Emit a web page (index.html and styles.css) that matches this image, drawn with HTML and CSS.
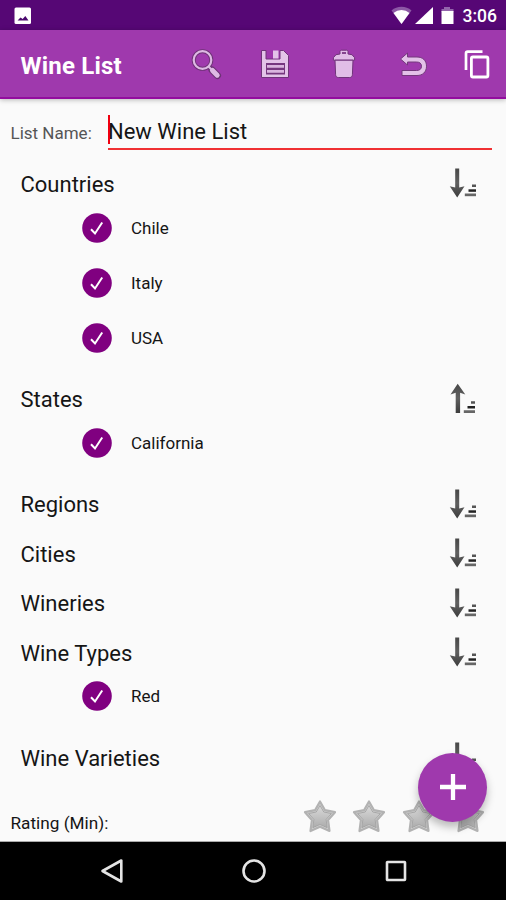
FILE: index.html
```html
<!DOCTYPE html>
<html lang="en">
<head>
<meta charset="utf-8">
<title>Wine List</title>
<link rel="stylesheet" href="styles.css">
</head>
<body>
<svg class="defs" aria-hidden="true">
  <defs>
    <linearGradient id="shaft" x1="0" x2="0" y1="0" y2="1"><stop offset="0" stop-color="#484848"/><stop offset=".5" stop-color="#606060"/><stop offset="1" stop-color="#3c3c3c"/></linearGradient>
    <linearGradient id="silver" x1="0" x2="0" y1="0" y2="1"><stop offset="0" stop-color="#dadada"/><stop offset="1" stop-color="#acacac"/></linearGradient>
    <symbol id="bars" viewBox="0 0 28 32"><path d="M23 17.500h4v2.500h-4z" fill="#555"/><path d="M19.500 22.300h7.500v2.500h-7.500z" fill="#222"/><path d="M15.800 26.500H27v2.700H15.800z" fill="#666"/></symbol>
    <symbol id="down" viewBox="0 0 28 32"><path d="M6.200 1.500h4v19l5.300-1.300L8.200 30.500.8 19.200l5.400 1.300z" fill="url(#shaft)"/><use href="#bars"/></symbol>
    <symbol id="up" viewBox="0 0 28 32"><path d="M6.700 30V9.800L1.500 11.500 8.700.7l7.600 10.800-5.200-1.700V30z" fill="url(#shaft)"/><use href="#bars" y=".8" x="-1"/></symbol>
    <symbol id="check" viewBox="0 0 30 30"><circle cx="15" cy="15" r="14.800" fill="#800080"/><path d="M9 16.200l4 4.300 7.200-11" fill="none" stroke="#fff" stroke-width="2"/></symbol>
    <symbol id="star" viewBox="0 0 34 34"><path d="M17 2.500l5 8.700 10 2-6.900 7.900 1.400 10.900L17 27.800 7.500 32l1.400-10.900L2 13.200l10-2z" fill="#d2d2d2" stroke="#b2b2b2" stroke-width="2.200" stroke-linejoin="round"/><path d="M17 6.500l3.800 6.500 7.600 1.500-5.300 6 1.100 8.200-7.200-3.200-7.200 3.200 1.100-8.200-5.300-6 7.600-1.500z" fill="url(#silver)" stroke="#a3a3a3" stroke-width=".9" stroke-linejoin="round"/></symbol>
  </defs>
</svg>
<div class="screen">
  <header class="status">
    <svg class="picture" viewBox="0 0 18 18"><rect x=".5" y=".5" width="16.500" height="16.500" rx="1.500" fill="#fff"/><path d="M3.500 13.500l3-3 2.200 1.500 2.600-3 3.200 4.500z" fill="#4a086e"/></svg>
    <div class="system">
      <svg class="signals" viewBox="0 0 66 20"><path d="M.5 4.500a15.500 15.500 0 0 1 20 0L10.500 18z" fill="#8c58a5"/><path d="M2.500 7a12.500 12.500 0 0 1 16 0L10.500 18z" fill="#fff"/><path d="M42 1v17H24z" fill="#fff"/><path d="M53 1h6v2h3.500v3h-12V3H53z" fill="#9365ab"/><path d="M50.500 5h12v13h-12z" fill="#fff"/></svg>
      <span class="time">3:06</span>
    </div>
  </header>
  <div class="toolbar">
    <h1>Wine List</h1>
    <div class="tools">
      <svg viewBox="0 0 34 34" fill="none"><circle cx="13.500" cy="13" r="8.800" stroke="#6d3275" stroke-width="4"/><path d="M19.500 19.500l4 4" stroke="#6d3275" stroke-width="4"/><path d="M23 23l5.500 5.500" stroke="#6d3275" stroke-width="7" stroke-linecap="round"/><circle cx="13.500" cy="13" r="8.800" stroke="#deb9e4" stroke-width="2.200"/><path d="M19.500 19.500l4 4" stroke="#deb9e4" stroke-width="2"/><path d="M23.500 23.500l4.700 4.700" stroke="#deb9e4" stroke-width="5" stroke-linecap="round"/></svg>
      <svg viewBox="0 0 34 34"><path d="M3.500 3.500H8V12h14V3.500h3.500l5 5v22h-27z" fill="#e3c4e8" stroke="#70347a"/><path d="M15 3.500h5.500v8H15z" fill="#e3c4e8"/><path d="M8 16h19v11.500H8z" fill="#76387f"/><path d="M9 18h17v2.800H9zm0 5h17v2.800H9z" fill="#dab5df"/></svg>
      <svg viewBox="0 0 34 34"><path d="M13 7V4.500c0-.8.600-1.300 1.400-1.300h5.200c.8 0 1.400.5 1.400 1.300V7l4 .7 2.600 3v2.500H6.400v-2.500L9 7.700z" fill="#e1bde7" stroke="#70347a"/><path d="M8 13.200h18l-.6 14.500c-.1 1.800-1 2.800-2.700 2.800H11.300c-1.700 0-2.600-1-2.700-2.800z" fill="#e1bde7" stroke="#70347a"/><path d="M15 5h4v2h-4z" fill="#85448e"/></svg>
      <svg viewBox="0 0 34 34"><path d="M4.500 12l7-6v4H21c5.500 0 9.500 3.300 9.500 9.200 0 6-4 9.300-9.500 9.300H6v-5h14.500c3.200 0 5-1.500 5-4.300 0-2.700-1.800-4.200-5-4.200h-9V18z" fill="#e3c1e8" stroke="#74387d"/></svg>
      <svg viewBox="0 0 34 34"><path d="M6 23V6.500c0-1 .7-1.800 1.700-1.800H22.500" fill="none" stroke="#fff" stroke-width="2.700"/><rect x="11.400" y="10" width="16.500" height="20" rx="1.500" fill="none" stroke="#fff" stroke-width="2.800"/></svg>
    </div>
  </div>
  <main>
    <div class="name-row">
      <label>List Name:</label>
      <div class="field">New Wine List</div>
    </div>
    <section><div class="heading"><h2>Countries</h2><svg><use href="#down"/></svg></div>
      <ul><li><svg><use href="#check"/></svg>Chile</li><li><svg><use href="#check"/></svg>Italy</li><li><svg><use href="#check"/></svg>USA</li></ul></section>
    <section><div class="heading"><h2>States</h2><svg><use href="#up"/></svg></div>
      <ul><li><svg><use href="#check"/></svg>California</li></ul></section>
    <section><div class="heading"><h2>Regions</h2><svg><use href="#down"/></svg></div></section>
    <section><div class="heading"><h2>Cities</h2><svg><use href="#down"/></svg></div></section>
    <section><div class="heading"><h2>Wineries</h2><svg><use href="#down"/></svg></div></section>
    <section><div class="heading"><h2>Wine Types</h2><svg><use href="#down"/></svg></div>
      <ul><li><svg><use href="#check"/></svg>Red</li></ul></section>
    <section><div class="heading"><h2>Wine Varieties</h2><svg><use href="#down"/></svg></div></section>
    <div class="rating"><span>Rating (Min):</span><div class="stars"><svg><use href="#star"/></svg><svg><use href="#star"/></svg><svg><use href="#star"/></svg><svg><use href="#star"/></svg></div></div>
    <button class="add" aria-label="Add"><svg viewBox="0 0 28 28"><path d="M14 1v26M1 14h26" stroke="#fff" stroke-width="4.300"/></svg></button>
  </main>
  <nav>
    <svg viewBox="0 0 28 28"><path d="M23.300 3.500v21L4.500 14z"/></svg>
    <svg viewBox="0 0 28 28"><circle cx="14" cy="14" r="10.500"/></svg>
    <svg viewBox="0 0 28 28"><rect x="5" y="5" width="18" height="18" rx=".5"/></svg>
  </nav>
</div>
</body>
</html>
```
FILE: styles.css
```css
* { box-sizing: border-box; }
body { margin: 0; font-family: Roboto, sans-serif; color: #151515; background: #fafafa; }
h1, h2, ul { margin: 0; padding: 0; }
.defs { position: absolute; width: 0; height: 0; }
.screen { width: 506px; height: 900px; display: flex; flex-direction: column; overflow: hidden; }
.status { height: 30px; flex: none; background: #560775; display: flex; align-items: center; justify-content: space-between; padding: 2px 9px 0 14px; }
.picture { width: 18px; height: 18px; }
.system { display: flex; align-items: center; gap: 6px; }
.signals { width: 66px; height: 20px; }
.time { color: #fff; font-size: 17.5px; font-weight: 500; line-height: 20px; }
.toolbar { height: 69px; flex: none; background: #9f39ad; border-bottom: 2px solid #930d9f; box-shadow: 0 1px 5px #0004; display: flex; align-items: center; justify-content: space-between; padding-left: 20.5px; z-index: 1; }
h1 { color: #fff; font-size: 24px; line-height: 30px; font-weight: 700; letter-spacing: .2px; padding-top: 4px; }
.tools { display: grid; grid-template-columns: 69px 69px 69px 69px 59px; justify-items: center; }
.tools svg { width: 34px; height: 34px; }
main { position: relative; height: 743px; flex: none; background: #fafafa; border-bottom: 1px solid #aaa; overflow: hidden; }
.name-row { display: flex; align-items: flex-start; padding: 16px 14px 0 10.5px; height: 60.5px; }
label { width: 97.5px; flex: none; color: #555; font-size: 17px; line-height: 20px; padding-top: 8px; }
.field { flex: 1; height: 35px; border-bottom: 2px solid #f03033; font-size: 22px; line-height: 34px; position: relative; }
.field::before { content: ""; position: absolute; left: 0; top: 0; width: 2px; height: 29px; background: #f00010; }
.heading { height: 49.5px; padding: 1px 29px 0 20.5px; display: flex; align-items: center; justify-content: space-between; }
h2 { font-size: 22px; line-height: 28px; font-weight: 400; }
.heading svg { width: 28px; height: 32px; margin-top: -3px; }
ul { list-style: none; margin: -9px 0 9.3px; }
li { height: 55.2px; padding-left: 81.5px; display: flex; align-items: center; gap: 19.5px; font-size: 17px; }
li svg { width: 30px; height: 30px; }
.rating { display: flex; align-items: center; justify-content: space-between; height: 70px; padding: 11px 21px 0 10.5px; font-size: 17.2px; }
.stars { display: flex; gap: 15.5px; margin-top: -15px; }
.stars svg { width: 34px; height: 34px; }
.add { position: absolute; left: 418px; top: 653.5px; width: 69px; height: 69px; padding: 0; border: 0; border-radius: 50%; background: #9f39ad; box-shadow: 0 5px 9px #0004; display: grid; place-items: center; }
.add svg { width: 28px; height: 28px; }
nav { flex: 1; background: #000; display: grid; grid-template-columns: repeat(3, 142px); justify-content: center; align-items: center; justify-items: center; padding-left: 2px; }
nav svg { width: 28px; height: 28px; fill: none; stroke: #e4e4e4; stroke-width: 2.6; stroke-linejoin: round; }
```
